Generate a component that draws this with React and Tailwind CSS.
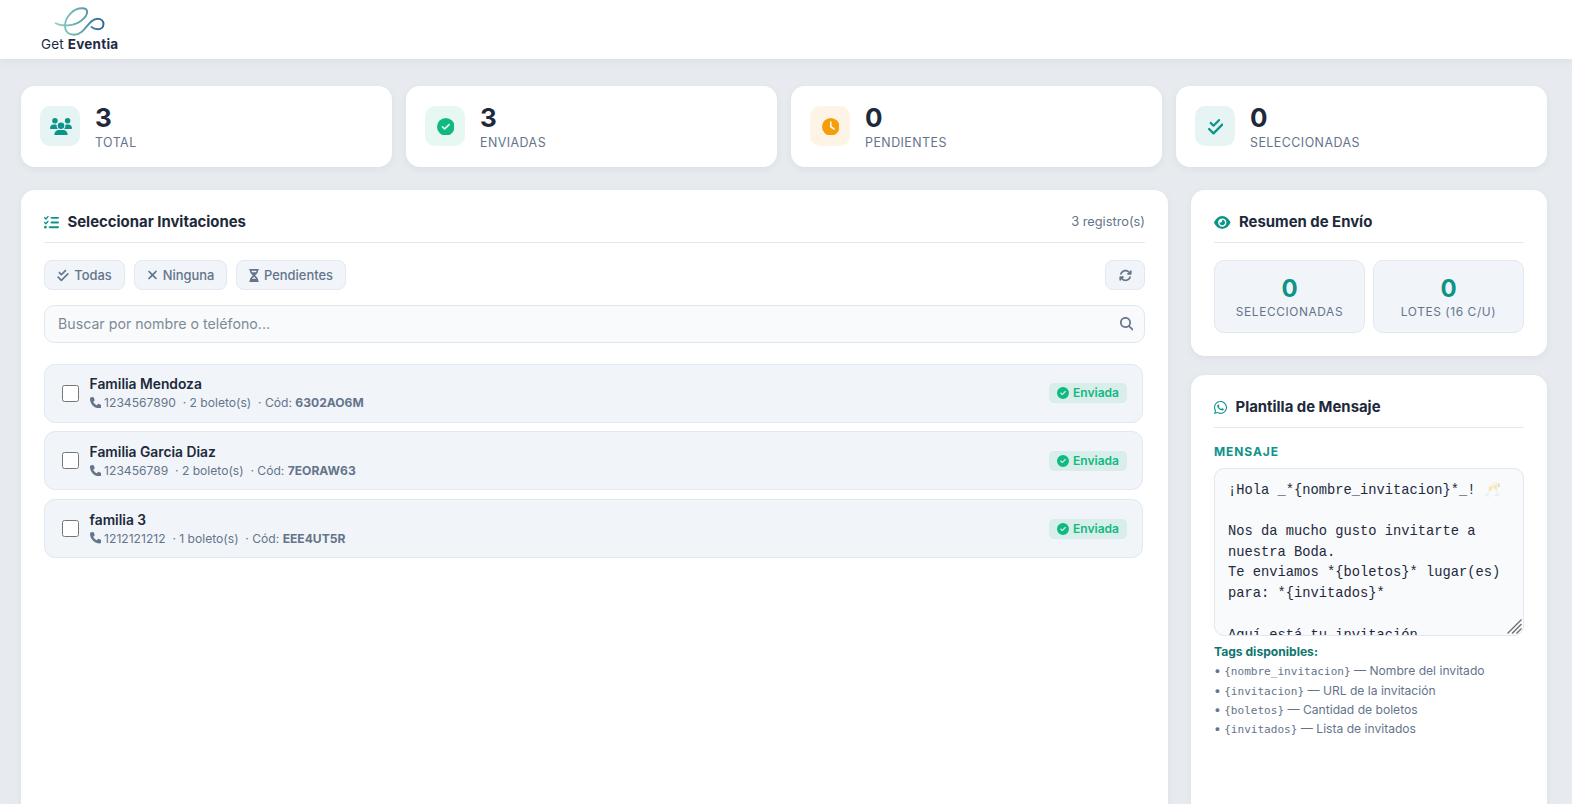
import React from "react";
import {
  FaUsers, FaCircleCheck, FaClock, FaCheckDouble, FaListCheck, FaXmark,
  FaHourglassHalf, FaArrowsRotate, FaMagnifyingGlass, FaPhone, FaEye, FaWhatsapp,
} from "react-icons/fa6";

const stats = [
  { icon: FaUsers, value: "3", label: "TOTAL", box: "bg-[#e6f4f3] text-[#0d9488]", size: "h-[17.6px] w-[22px]" },
  { icon: FaCircleCheck, value: "3", label: "ENVIADAS", box: "bg-[#e7f8f2] text-[#10b981]", size: "size-[17.6px]" },
  { icon: FaClock, value: "0", label: "PENDIENTES", box: "bg-[#fef4e6] text-[#f59e0b]", size: "size-[17.6px]" },
  { icon: FaCheckDouble, value: "0", label: "SELECCIONADAS", box: "bg-[#e6f4f3] text-[#0d9488]", size: "h-[17.6px] w-[15.4px]" },
];

const guests = [
  { name: "Familia Mendoza", phone: "1234567890", tickets: 2, code: "6302AO6M" },
  { name: "Familia Garcia Diaz", phone: "123456789", tickets: 2, code: "7EORAW63" },
  { name: "familia 3", phone: "1212121212", tickets: 1, code: "EEE4UT5R" },
];

const tags = [
  ["{nombre_invitacion}", "Nombre del invitado"],
  ["{invitacion}", "URL de la invitación"],
  ["{boletos}", "Cantidad de boletos"],
  ["{invitados}", "Lista de invitados"],
];

const card = "rounded-[14px] bg-white shadow-[0_2px_8px_rgba(15,23,42,0.05)]";

function Logo() {
  return (
    <div className="ml-[41px] flex w-[78px] flex-col pt-[6px]">
      <svg className="ml-[13px] h-[31px] w-[52px]" viewBox="54 6 52 31" fill="none">
        <defs>
          <linearGradient id="stroke" x1="55" y1="0" x2="105" y2="0" gradientUnits="userSpaceOnUse">
            <stop offset="0" stopColor="#8fd3c4" />
            <stop offset="0.5" stopColor="#64a9ae" />
            <stop offset="1" stopColor="#2d5f98" />
          </linearGradient>
        </defs>
        <path
          d="M55.7 23.2C61 26.500 74 26.500 81.500 20.500C88.500 15 89.500 8.200 82 8.200C73 8.200 65 17.500 65 25.500C65 32 69 34.800 74 34.800C85.500 34.800 88 18.700 97.500 18.700C101 18.700 103.500 21 103.500 24C103.500 27.300 101 29.200 98 29.200C95.500 29.200 93 28.500 91.500 27"
          stroke="url(#stroke)"
          strokeWidth="1.9"
          strokeLinecap="round"
        />
      </svg>
      <div className="flex h-[15px] items-center gap-[4px] whitespace-nowrap text-[13.5px] leading-[15px] tracking-[0.12px] text-[#1e2a47]">
        <span>Get</span>
        <span className="font-bold tracking-[0.25px]">Eventia</span>
      </div>
    </div>
  );
}

function Heading({ icon: Icon, size, title, children }) {
  return (
    <div className="flex h-[30px] items-start justify-between border-b border-[#e2e8f0]">
      <h2 className="flex items-center gap-[8.500px] text-[14.9px] leading-[18px] font-bold text-[#1e293b]">
        <Icon className={`${size} text-[#0d9488]`} />
        {title}
      </h2>
      {children}
    </div>
  );
}

function ToolButton({ icon: Icon, size, label, width }) {
  return (
    <button className={`flex h-[30px] items-center justify-center gap-[5px] rounded-lg border border-[#e2e8f0] bg-[#f1f5f9] text-[12.9px] font-medium text-[#64748b] ${width}`}>
      <Icon className={size} />
      {label && <span className="pt-px">{label}</span>}
    </button>
  );
}

function Guest({ name, phone, tickets, code }) {
  return (
    <li className="flex h-[59.2px] items-center rounded-[11px] border border-[#e2e8f0] bg-[#f1f5f9] pr-[15px] pl-[17px]">
      <input type="checkbox" className="mr-[10.600px] size-[17px] shrink-0" />
      <div className="flex-1 pb-px">
        <div className="text-[13.8px] leading-[20px] font-semibold text-[#1e293b]">{name}</div>
        <div className="flex items-center whitespace-pre text-[12.1px] leading-[17px] text-[#64748b]">
          <FaPhone className="mr-[3px] size-[11.5px]" />
          {phone}{"  "}· {tickets} boleto(s){"  "}· Cód: <strong className="font-bold">{code}</strong>
        </div>
      </div>
      <span className="flex h-5 w-[78px] items-center justify-center gap-1 rounded-[5px] bg-[#d8eeea] text-[12px] font-semibold text-[#10b981]">
        <FaCircleCheck className="size-3" />
        Enviada
      </span>
    </li>
  );
}

function Summary({ label }) {
  return (
    <div className="flex h-[73px] flex-1 flex-col items-center rounded-[10px] border border-[#e2e8f0] bg-[#f1f5f9] pt-[13px]">
      <div className="text-[24px] leading-[30px] font-bold text-[#0d9488]">0</div>
      <div className="-mt-px text-[11.9px] leading-[17px] tracking-[0.6px] text-[#64748b]">{label}</div>
    </div>
  );
}

function MessageBox() {
  return (
    <div className="relative mt-2 h-[168px] w-[310px] overflow-hidden rounded-[10px] border border-[#e2e8f0] bg-[#f8fafc]">
      <div
        role="textbox"
        aria-multiline="true"
        className="px-[13px] pt-[11.6px] font-['Liberation_Mono',monospace] text-[13.76px] leading-[20.7px] whitespace-pre-wrap text-[#1e293b]"
      >
        {"¡Hola _*{nombre_invitacion}*_! "}
        <span className="opacity-50">🥂</span>
        {"\n\nNos da mucho gusto invitarte a nuestra Boda.\nTe enviamos *{boletos}* lugar(es) para: *{invitados}*\n\nAquí está tu invitación"}
      </div>
      <svg className="absolute right-[1px] bottom-[1px] size-[15px]" viewBox="0 0 15 15" stroke="#6b6f74" strokeWidth="1.3">
        <path d="M0.5 14.5L14.5 0.500M5 14.500L14.500 5M9.500 14.500L14.500 9.500" />
      </svg>
    </div>
  );
}

export default function App() {
  return (
    <div className="flex h-[804px] flex-col overflow-hidden bg-[#e7ebf0] font-['Inter',sans-serif] text-[#1e293b]">
      <header className="h-[59px] shrink-0 bg-white shadow-[0_2px_10px_rgba(15,23,42,0.06)]">
        <Logo />
      </header>

      <main className="flex min-h-0 flex-1 flex-col gap-[23px] pt-[27px] pr-[25px] pl-[21px]">
        <section className="grid shrink-0 grid-cols-4 gap-[14px]">
          {stats.map(({ icon: Icon, value, label, box, size }) => (
            <div key={label} className={`flex h-[81px] items-center gap-[15px] px-[19px] ${card}`}>
              <div className={`mb-px flex size-10 items-center justify-center rounded-[10px] pt-px pl-px ${box}`}>
                <Icon className={size} />
              </div>
              <div className="pt-px">
                <div className="text-[26px] leading-[31px] font-bold">{value}</div>
                <div className="text-[12.4px] leading-[19px] tracking-[0.48px] text-[#64748b]">{label}</div>
              </div>
            </div>
          ))}
        </section>

        <div className="flex min-h-0 flex-1 gap-[23px]">
          <section className={`h-[700px] flex-1 px-[23px] pt-[23px] ${card}`}>
            <Heading icon={FaListCheck} size="size-[15px]" title="Seleccionar Invitaciones">
              <span className="text-[12.8px] leading-[17px] text-[#64748b]">3 registro(s)</span>
            </Heading>
            <div className="mt-[17px] flex gap-[9px]">
              <ToolButton icon={FaCheckDouble} size="h-[13px] w-[12px]" label="Todas" width="w-[81px]" />
              <ToolButton icon={FaXmark} size="h-[14px] w-[11px]" label="Ninguna" width="w-[93px]" />
              <ToolButton icon={FaHourglassHalf} size="h-[13px] w-[10px]" label="Pendientes" width="w-[110px]" />
              <div className="flex-1" />
              <ToolButton icon={FaArrowsRotate} size="size-[13px]" width="w-[40px]" />
            </div>
            <div className="mt-[15px] flex h-[38px] items-center justify-between rounded-[10px] border border-[#e2e8f0] bg-[#f8fafc] pr-[11px] pl-[13px] text-[14.2px] text-[#808a94]">
              <span>Buscar por nombre o teléfono...</span>
              <FaMagnifyingGlass className="size-[13.5px] text-[#64748b]" />
            </div>
            <ul className="mt-[20.6px] mr-[2px] flex flex-col gap-[8.5px]">
              {guests.map((g) => <Guest key={g.code} {...g} />)}
            </ul>
          </section>

          <aside className="flex w-[356px] flex-col gap-[19px]">
            <section className={`h-[166px] shrink-0 px-[23px] pt-[23px] ${card}`}>
              <Heading icon={FaEye} size="h-[15px] w-[16.500px]" title="Resumen de Envío" />
              <div className="mt-[17px] flex gap-2">
                <Summary label="SELECCIONADAS" />
                <Summary label="LOTES (16 C/U)" />
              </div>
            </section>

            <section className={`h-[500px] shrink-0 px-[23px] pt-[23px] ${card}`}>
              <Heading icon={FaWhatsapp} size="h-[15px] w-[13px]" title="Plantilla de Mensaje" />
              <div className="mt-[15px] text-[12px] leading-[17px] font-bold tracking-[0.9px] text-[#0d9488]">MENSAJE</div>
              <MessageBox />
              <div className="mt-[6px] text-[12.1px] leading-[19.3px] text-[#64748b]">
                <div className="font-bold text-[#0f766e]">Tags disponibles:</div>
                {tags.map(([tag, text]) => (
                  <div key={tag} className="h-[19.3px]">
                    • <code className="font-['DejaVu_Sans_Mono',monospace] text-[11.05px] leading-none">{tag}</code> — {text}
                  </div>
                ))}
              </div>
            </section>
          </aside>
        </div>
      </main>
    </div>
  );
}
